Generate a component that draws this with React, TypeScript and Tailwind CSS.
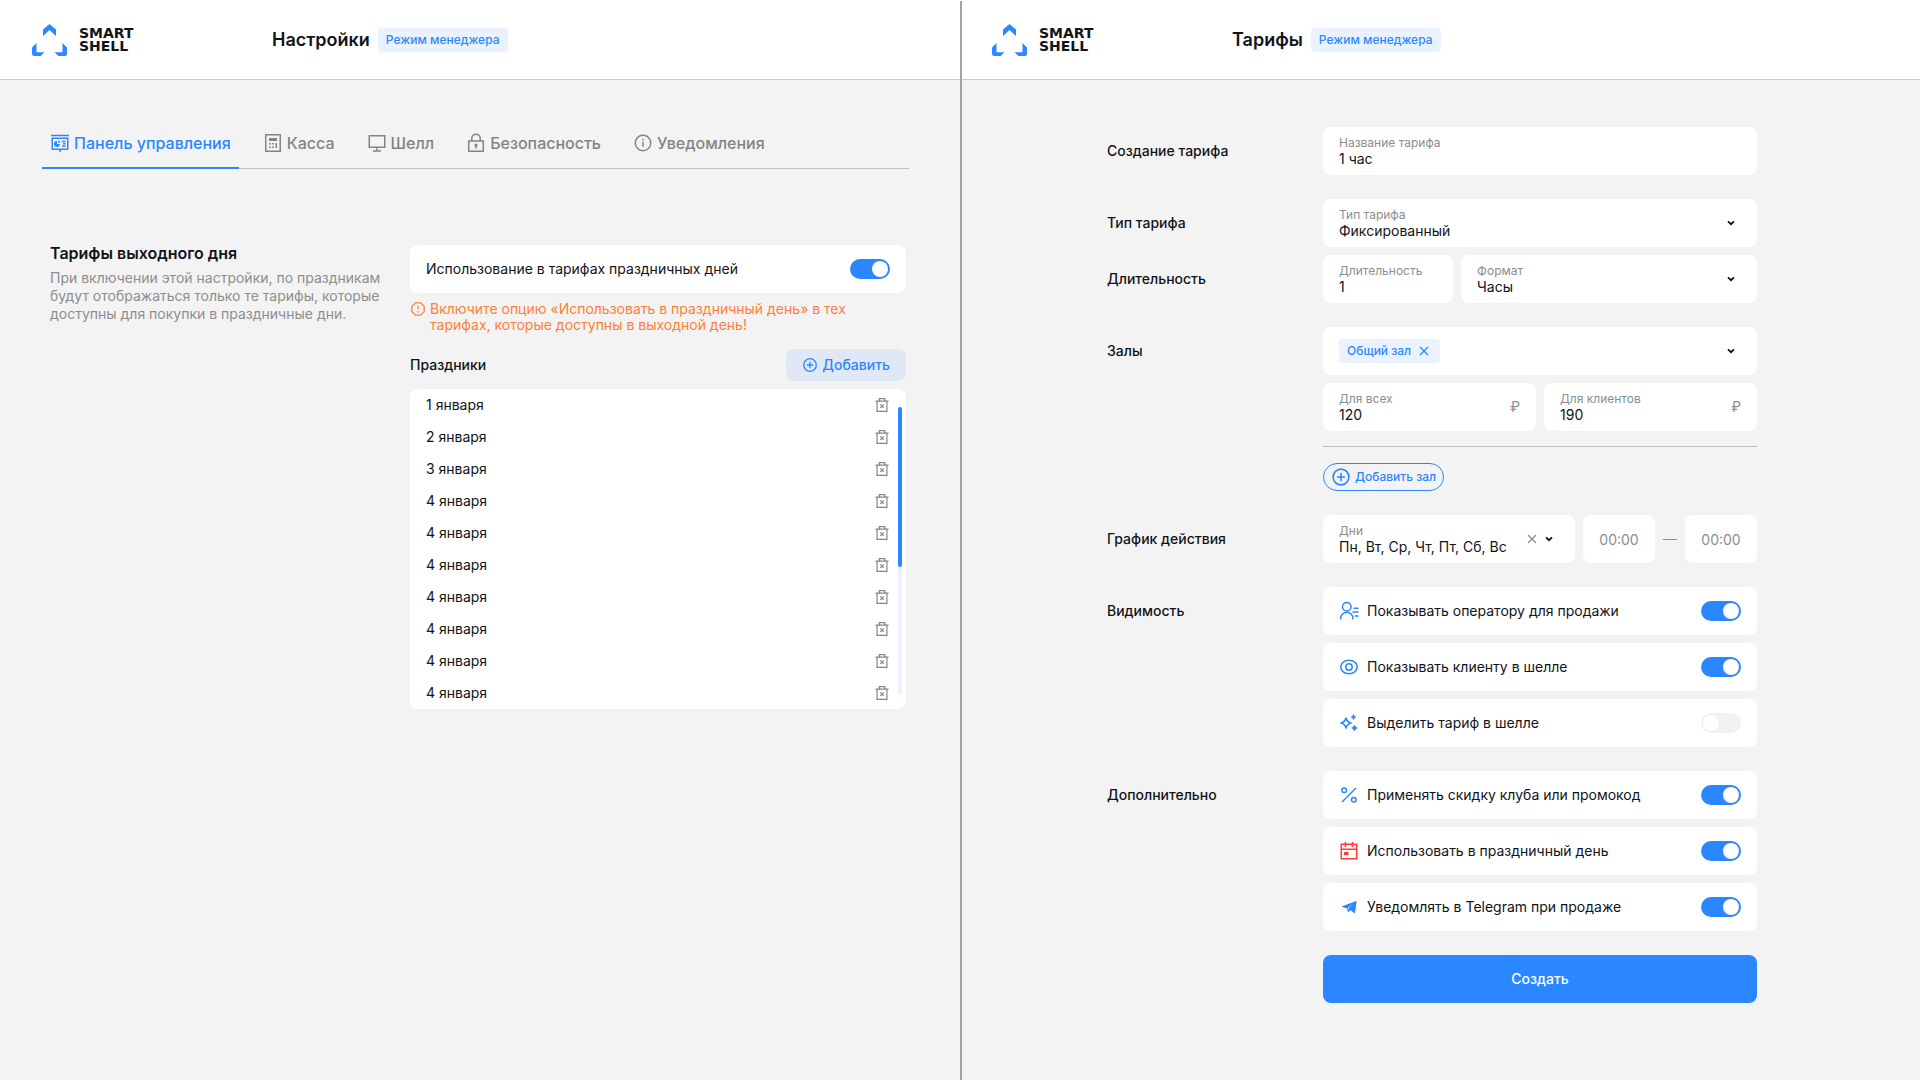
import React, { useId } from "react";

type IconProps = { className?: string };

const Logo = () => (
  <a href="#" aria-label="Smart Shell" className="flex items-center gap-3">
    <svg width="35" height="32" viewBox="0 0 35 32" fill="#2b87ff" aria-hidden="true">
      <path d="M17.500 0 24 5.500V12l-6.500-6L11 12V5.500z" />
      <path d="M4.500 19v9.200h8L8.500 32H1.500L0 30.500V23.500z" />
      <path d="M30.500 19v9.200h-8l4 3.800h7l1.500-1.500V23.500z" />
    </svg>
    <span className="font-['DejaVu_Sans'] text-[14px] font-bold leading-[13px] text-[#111319]">
      SMART
      <br />
      SHELL
    </span>
  </a>
);

const PanelIcon = ({ className }: IconProps) => (
  <svg className={className} width="20" height="20" viewBox="0 0 20 20" fill="none" stroke="currentColor" strokeWidth="1.500" aria-hidden="true">
    <path d="M1 2.500h18M2.250 5.250h15.500v11H2.250z" />
    <path d="M10 16v3M12 8.500h3.500M13 10.750h2.500M12 13h3.500" />
    <path d="M7 8v3h3a3 3 0 1 1-3-3z" fill="currentColor" stroke="none" />
    <path d="M8.200 7.500a2.500 2.500 0 0 1 2.300 2.300H8.200z" fill="currentColor" stroke="none" />
  </svg>
);

const CalcIcon = ({ className }: IconProps) => (
  <svg className={className} width="20" height="20" viewBox="0 0 20 20" fill="none" stroke="currentColor" strokeWidth="1.500" aria-hidden="true">
    <path d="M2.750 1.750h14.500v16.500H2.750z" />
    <path d="M6 5h8v3H6z" fill="currentColor" stroke="none" />
    <path d="M6 10.750h1.800M9.100 10.750h1.800M6 14.250h1.800M9.100 14.250h1.800M13.250 10v5" />
  </svg>
);

const MonitorIcon = ({ className }: IconProps) => (
  <svg className={className} width="20" height="20" viewBox="0 0 20 20" fill="none" stroke="currentColor" strokeWidth="1.500" aria-hidden="true">
    <path d="M2.250 2.750h15.500v11.500H2.250zM10 14v4M6 18h8" />
  </svg>
);

const LockIcon = ({ className }: IconProps) => (
  <svg className={className} width="20" height="20" viewBox="0 0 20 20" fill="none" stroke="currentColor" strokeWidth="1.500" aria-hidden="true">
    <path d="M2.750 8h14.500v10.250H2.750zM5.750 8V5.500a4.250 4.250 0 0 1 8.500 0V8M10 12v3.500" />
    <circle cx="10" cy="12" r="1.600" fill="currentColor" stroke="none" />
  </svg>
);

const InfoIcon = ({ className }: IconProps) => (
  <svg className={className} width="20" height="20" viewBox="0 0 20 20" fill="none" stroke="currentColor" strokeWidth="1.500" aria-hidden="true">
    <circle cx="10" cy="10" r="7.750" />
    <path d="M10 8.800v5M10 5.800v1.700" />
  </svg>
);

const WarnIcon = () => (
  <svg className="shrink-0" width="16" height="16" viewBox="0 0 16 16" fill="none" stroke="currentColor" strokeWidth="1.300" aria-hidden="true">
    <path d="M5.400 1.850h5.200l3.550 3.550v5.200l-3.550 3.550H5.400L1.850 10.600V5.400z" strokeLinejoin="round" />
    <path d="M8 4.600v4M8 10v1.500" />
  </svg>
);

const PlusIcon = ({ size }: { size: number }) => (
  <svg width={size} height={size} viewBox="0 0 16 16" fill="none" stroke="currentColor" strokeWidth="1.300" aria-hidden="true">
    <circle cx="8" cy="8" r="6.300" />
    <path d="M8 4.800v6.400M4.800 8h6.400" />
  </svg>
);

const TrashIcon = () => (
  <svg width="16" height="16" viewBox="0 0 16 16" fill="none" stroke="currentColor" strokeWidth="1.200" aria-hidden="true">
    <path d="M1.500 4.100h13M5.200 4V1.700h5.600V4M3.100 4v10.300h9.800V4" />
    <path d="M6.300 7.400l3.400 3.400M9.700 7.400l-3.400 3.400" />
  </svg>
);

const ChevronIcon = () => (
  <svg className="pointer-events-none shrink-0" width="8" height="6" viewBox="0 0 8 6" fill="none" stroke="#111319" strokeWidth="1.800" aria-hidden="true">
    <path d="M1 1.300 4 4.200 7 1.300" />
  </svg>
);

const CloseIcon = () => (
  <svg width="10" height="10" viewBox="0 0 10 10" fill="none" stroke="currentColor" strokeWidth="1.300" aria-hidden="true">
    <path d="M1 1l8 8M9 1 1 9" />
  </svg>
);

const OperatorIcon = () => (
  <svg width="20" height="20" viewBox="0 0 20 20" fill="none" stroke="currentColor" strokeWidth="1.500" aria-hidden="true">
    <circle cx="7.800" cy="5.800" r="4.300" />
    <path d="M1.700 18.500v-1.200a6.100 6.100 0 0 1 12.200 0v1.200M14.500 7.200h5M13.500 11h6M15.800 15h3.700" />
  </svg>
);

const EyeIcon = () => (
  <svg width="20" height="20" viewBox="0 0 20 20" fill="none" stroke="currentColor" strokeWidth="1.500" aria-hidden="true">
    <path d="M10 3.200c4.500 0 8.200 3 8.200 6.800s-3.700 6.800-8.200 6.800S1.800 13.800 1.800 10 5.500 3.200 10 3.200z" />
    <circle cx="10" cy="10" r="3.200" />
  </svg>
);

const SparkIcon = () => (
  <svg width="20" height="20" viewBox="0 0 20 20" fill="none" stroke="currentColor" strokeWidth="1.600" strokeLinejoin="round" aria-hidden="true">
    <path d="M7 5Q8 9 12 10Q8 11 7 15Q6 11 2 10Q6 9 7 5z" />
    <path d="M14.500 1.500q.5 2 2.300 2.500-1.800.5-2.300 2.500-.5-2-2.300-2.500 1.800-.5 2.300-2.500zM15.500 12.300q.5 2 2.700 2.700-2.200.7-2.700 2.700-.5-2-2.700-2.700 2.200-.7 2.700-2.700z" fill="currentColor" strokeWidth=".8" />
  </svg>
);

const PercentIcon = () => (
  <svg width="20" height="20" viewBox="0 0 20 20" fill="none" stroke="currentColor" strokeWidth="1.500" aria-hidden="true">
    <circle cx="5.200" cy="5.200" r="2.300" />
    <circle cx="14.800" cy="14.800" r="2.300" />
    <path d="M17 3 3 17" />
  </svg>
);

const CalendarIcon = () => (
  <svg className="text-[#ff3b3b]" width="20" height="20" viewBox="0 0 20 20" fill="none" stroke="currentColor" strokeWidth="1.500" aria-hidden="true">
    <path d="M2.250 3.250h15.500v14.500H2.250zM2 8.250h16M6.500 1v5M13.500 1v5" />
    <path d="M5 11h4.500v3.200H5z" fill="currentColor" stroke="none" />
  </svg>
);

const TelegramIcon = () => (
  <svg width="20" height="20" viewBox="0 0 20 20" fill="currentColor" aria-hidden="true">
    <path d="M17.200 4c.3-.1.500.1.400.4l-1.500 11.200c-.1.500-.5.600-.9.300l-3.600-2.700-1.900 1.900c-.3.300-.7.200-.8-.2l-.9-3.400L3.200 10c-.4-.2-.4-.5 0-.7zM13.600 7l-5 4.300.5 2.200.4-1.900z" />
  </svg>
);

const Header = ({ title }: { title: string }) => (
  <header className="flex h-20 items-center border-b border-[#c8c8c8] bg-white">
    <div className="w-[240px] shrink-0 pl-8">
      <Logo />
    </div>
    <div className="flex items-center gap-2 pl-8 pt-px">
      <h1 className="text-[18px] font-semibold leading-6">{title}</h1>
      <span className="rounded bg-[#eaf2ff] px-2 text-[12px] font-medium leading-6 text-[#2b87ff]">Режим менеджера</span>
    </div>
  </header>
);

const Switch = ({ id, on }: { id: string; on: boolean }) => (
  <input
    id={id}
    type="checkbox"
    role="switch"
    defaultChecked={on}
    className="h-5 w-10 shrink-0 cursor-pointer appearance-none rounded-full bg-[#f2f2f2] p-[2px] before:block before:size-4 before:rounded-full before:bg-white checked:bg-[#2b87ff] checked:before:translate-x-5"
  />
);

const SwitchCard = ({ text, on, icon }: { text: string; on: boolean; icon?: React.ReactNode }) => {
  const id = useId();
  return (
    <div className="flex h-12 items-center gap-2 rounded-lg bg-white px-4">
      {icon && <span className="text-[#2b87ff]">{icon}</span>}
      <label htmlFor={id} className="flex-1 text-[14px] leading-5">
        {text}
      </label>
      <Switch id={id} on={on} />
    </div>
  );
};

const TextField = ({ label, value, suffix }: { label: string; value: string; suffix?: string }) => {
  const id = useId();
  return (
    <div className="flex h-12 items-center rounded-lg bg-white px-4">
      <div className="flex min-w-0 flex-1 flex-col">
        <label htmlFor={id} className="text-[12px] leading-4 text-[#8c8e8e]">
          {label}
        </label>
        <input id={id} defaultValue={value} className="h-4 w-full text-[14px] leading-4 outline-none" />
      </div>
      {suffix && <span className="text-[14px] leading-5 text-[#8c8e8e]">{suffix}</span>}
    </div>
  );
};

const SelectField = ({ label, value, clearable }: { label: string; value: string; clearable?: boolean }) => {
  const id = useId();
  return (
    <div className="flex h-12 items-center gap-2 rounded-lg bg-white pl-4 pr-[22px]">
      <div className="flex min-w-0 flex-1 flex-col">
        <label htmlFor={id} className="text-[12px] leading-4 text-[#8c8e8e]">
          {label}
        </label>
        <select id={id} className="h-4 w-full appearance-none text-[14px] leading-4 outline-none">
          <option>{value}</option>
        </select>
      </div>
      {clearable && (
        <button type="button" aria-label="Очистить" className="text-[#8c8e8e]">
          <CloseIcon />
        </button>
      )}
      <ChevronIcon />
    </div>
  );
};

const TimeField = ({ label }: { label: string }) => (
  <input
    aria-label={label}
    placeholder="00:00"
    className="h-12 w-[72px] rounded-lg bg-white text-center text-[14px] leading-5 outline-none placeholder:text-[#8c8e8e]"
  />
);

const FormRow = ({ label, children }: { label: string; children: React.ReactNode }) => (
  <section className="grid grid-cols-[216px_minmax(0,1fr)]">
    <h2 className="text-[14px] font-medium leading-[48px]">{label}</h2>
    <div className="flex flex-col gap-2">{children}</div>
  </section>
);

const tabs = [
  { name: "Панель управления", Icon: PanelIcon, active: true },
  { name: "Касса", Icon: CalcIcon, active: false },
  { name: "Шелл", Icon: MonitorIcon, active: false },
  { name: "Безопасность", Icon: LockIcon, active: false },
  { name: "Уведомления", Icon: InfoIcon, active: false },
];

const holidays = [
  "1 января",
  "2 января",
  "3 января",
  "4 января",
  "4 января",
  "4 января",
  "4 января",
  "4 января",
  "4 января",
  "4 января",
];

const SettingsPanel = () => (
  <div>
    <Header title="Настройки" />
    <main className="pl-[42px] pr-[51px] pt-10">
      <nav role="tablist" className="flex h-[49px] gap-4 border-b border-[#c0c0c0]">
        {tabs.map(({ name, Icon, active }) => (
          <button
            key={name}
            type="button"
            role="tab"
            aria-selected={active}
            className={
              active
                ? "-mb-px flex h-[49px] items-center gap-1 border-b-2 border-[#2b87ff] px-2 pb-[2px] text-[16px] font-medium text-[#2b87ff]"
                : "flex h-[49px] items-center gap-1 px-2 pb-1 text-[16px] font-medium text-[#828585]"
            }
          >
            <Icon className="shrink-0" />
            {name}
          </button>
        ))}
      </nav>
      <div className="mt-[76px] grid grid-cols-[360px_minmax(0,1fr)] pl-2 pr-[3px]">
        <div>
          <h2 className="text-[16px] font-semibold leading-4">Тарифы выходного дня</h2>
          <p className="mt-2 w-[344px] text-[14px] leading-[18px] text-[#8c8e8e]">
            При включении этой настройки, по праздникам будут отображаться только те тарифы, которые доступны для
            покупки в праздничные дни.
          </p>
        </div>
        <div>
          <SwitchCard text="Использование в тарифах праздничных дней" on />
          <p className="mt-2 flex gap-1 text-[14px] leading-4 text-[#ff7f37]">
            <WarnIcon />
            <span className="max-w-[440px]">
              Включите опцию «Использовать в праздничный день» в тех тарифах, которые доступны в выходной день!
            </span>
          </p>
          <div className="mt-4 flex items-center justify-between">
            <h3 className="text-[14px] font-medium leading-5">Праздники</h3>
            <button
              type="button"
              className="flex h-8 items-center gap-1 rounded-lg bg-[#e0e7f5] px-4 text-[14px] font-medium leading-5 text-[#2b87ff]"
            >
              <PlusIcon size={16} />
              Добавить
            </button>
          </div>
          <div className="relative mt-2 rounded-lg bg-white">
            <ul>
              {holidays.map((day, i) => (
                <li key={i} className="flex h-8 items-center justify-between px-4 text-[14px] leading-5">
                  {day}
                  <button type="button" aria-label={`Удалить: ${day}`} className="text-[#828585]">
                    <TrashIcon />
                  </button>
                </li>
              ))}
            </ul>
            <div className="absolute bottom-[14px] right-1 top-[18px] w-1 rounded-full bg-[#eaf2ff]">
              <div className="h-40 rounded-full bg-[#2b87ff]" />
            </div>
          </div>
        </div>
      </div>
    </main>
  </div>
);

const TariffPanel = () => (
  <div className="relative">
    <Header title="Тарифы" />
    <div className="absolute bottom-0 left-0 top-px w-[2px] bg-[#a3a3a3]" />
    <main className="pl-[147px] pr-[163px] pt-[47px]">
      <form className="flex flex-col gap-6">
        <FormRow label="Создание тарифа">
          <TextField label="Название тарифа" value="1 час" />
        </FormRow>
        <div className="flex flex-col gap-2">
          <FormRow label="Тип тарифа">
            <SelectField label="Тип тарифа" value="Фиксированный" />
          </FormRow>
          <FormRow label="Длительность">
            <div className="grid grid-cols-[130px_minmax(0,1fr)] gap-2">
              <TextField label="Длительность" value="1" />
              <SelectField label="Формат" value="Часы" />
            </div>
          </FormRow>
        </div>
        <FormRow label="Залы">
          <div className="flex h-12 items-center justify-between rounded-lg bg-white pl-4 pr-[22px]">
            <span className="flex h-6 items-center gap-2 rounded bg-[#eaf2ff] pl-2 pr-[11px] text-[12px] font-medium leading-4 text-[#2b87ff]">
              Общий зал
              <button type="button" aria-label="Убрать зал">
                <CloseIcon />
              </button>
            </span>
            <button type="button" aria-label="Выбрать залы">
              <ChevronIcon />
            </button>
          </div>
          <div className="grid grid-cols-2 gap-2">
            <TextField label="Для всех" value="120" suffix="₽" />
            <TextField label="Для клиентов" value="190" suffix="₽" />
          </div>
          <hr className="mb-2 mt-[7px] border-[#c0c0c0]" />
          <button
            type="button"
            className="flex h-7 items-center gap-1 self-start rounded-full border border-[#2b87ff] px-[7px] text-[12px] font-medium leading-4 text-[#2b87ff]"
          >
            <PlusIcon size={20} />
            Добавить зал
          </button>
        </FormRow>
        <FormRow label="График действия">
          <div className="flex items-center gap-2">
            <div className="flex-1">
              <SelectField label="Дни" value="Пн, Вт, Ср, Чт, Пт, Сб, Вс" clearable />
            </div>
            <TimeField label="Время начала" />
            <span className="h-px w-[14px] bg-[#8c8e8e]" />
            <TimeField label="Время окончания" />
          </div>
        </FormRow>
        <FormRow label="Видимость">
          <SwitchCard icon={<OperatorIcon />} text="Показывать оператору для продажи" on />
          <SwitchCard icon={<EyeIcon />} text="Показывать клиенту в шелле" on />
          <SwitchCard icon={<SparkIcon />} text="Выделить тариф в шелле" on={false} />
        </FormRow>
        <FormRow label="Дополнительно">
          <SwitchCard icon={<PercentIcon />} text="Применять скидку клуба или промокод" on />
          <SwitchCard icon={<CalendarIcon />} text="Использовать в праздничный день" on />
          <SwitchCard icon={<TelegramIcon />} text="Уведомлять в Telegram при продаже" on />
        </FormRow>
        <button
          type="button"
          className="ml-[216px] h-12 rounded-lg bg-[#2b87ff] text-[14px] font-medium leading-5 text-white"
        >
          Создать
        </button>
      </form>
    </main>
  </div>
);

export default function App() {
  return (
    <div className="grid min-h-screen grid-cols-2 bg-[#f3f3f3] font-['Inter',sans-serif] text-[#111319]">
      <SettingsPanel />
      <TariffPanel />
    </div>
  );
}
